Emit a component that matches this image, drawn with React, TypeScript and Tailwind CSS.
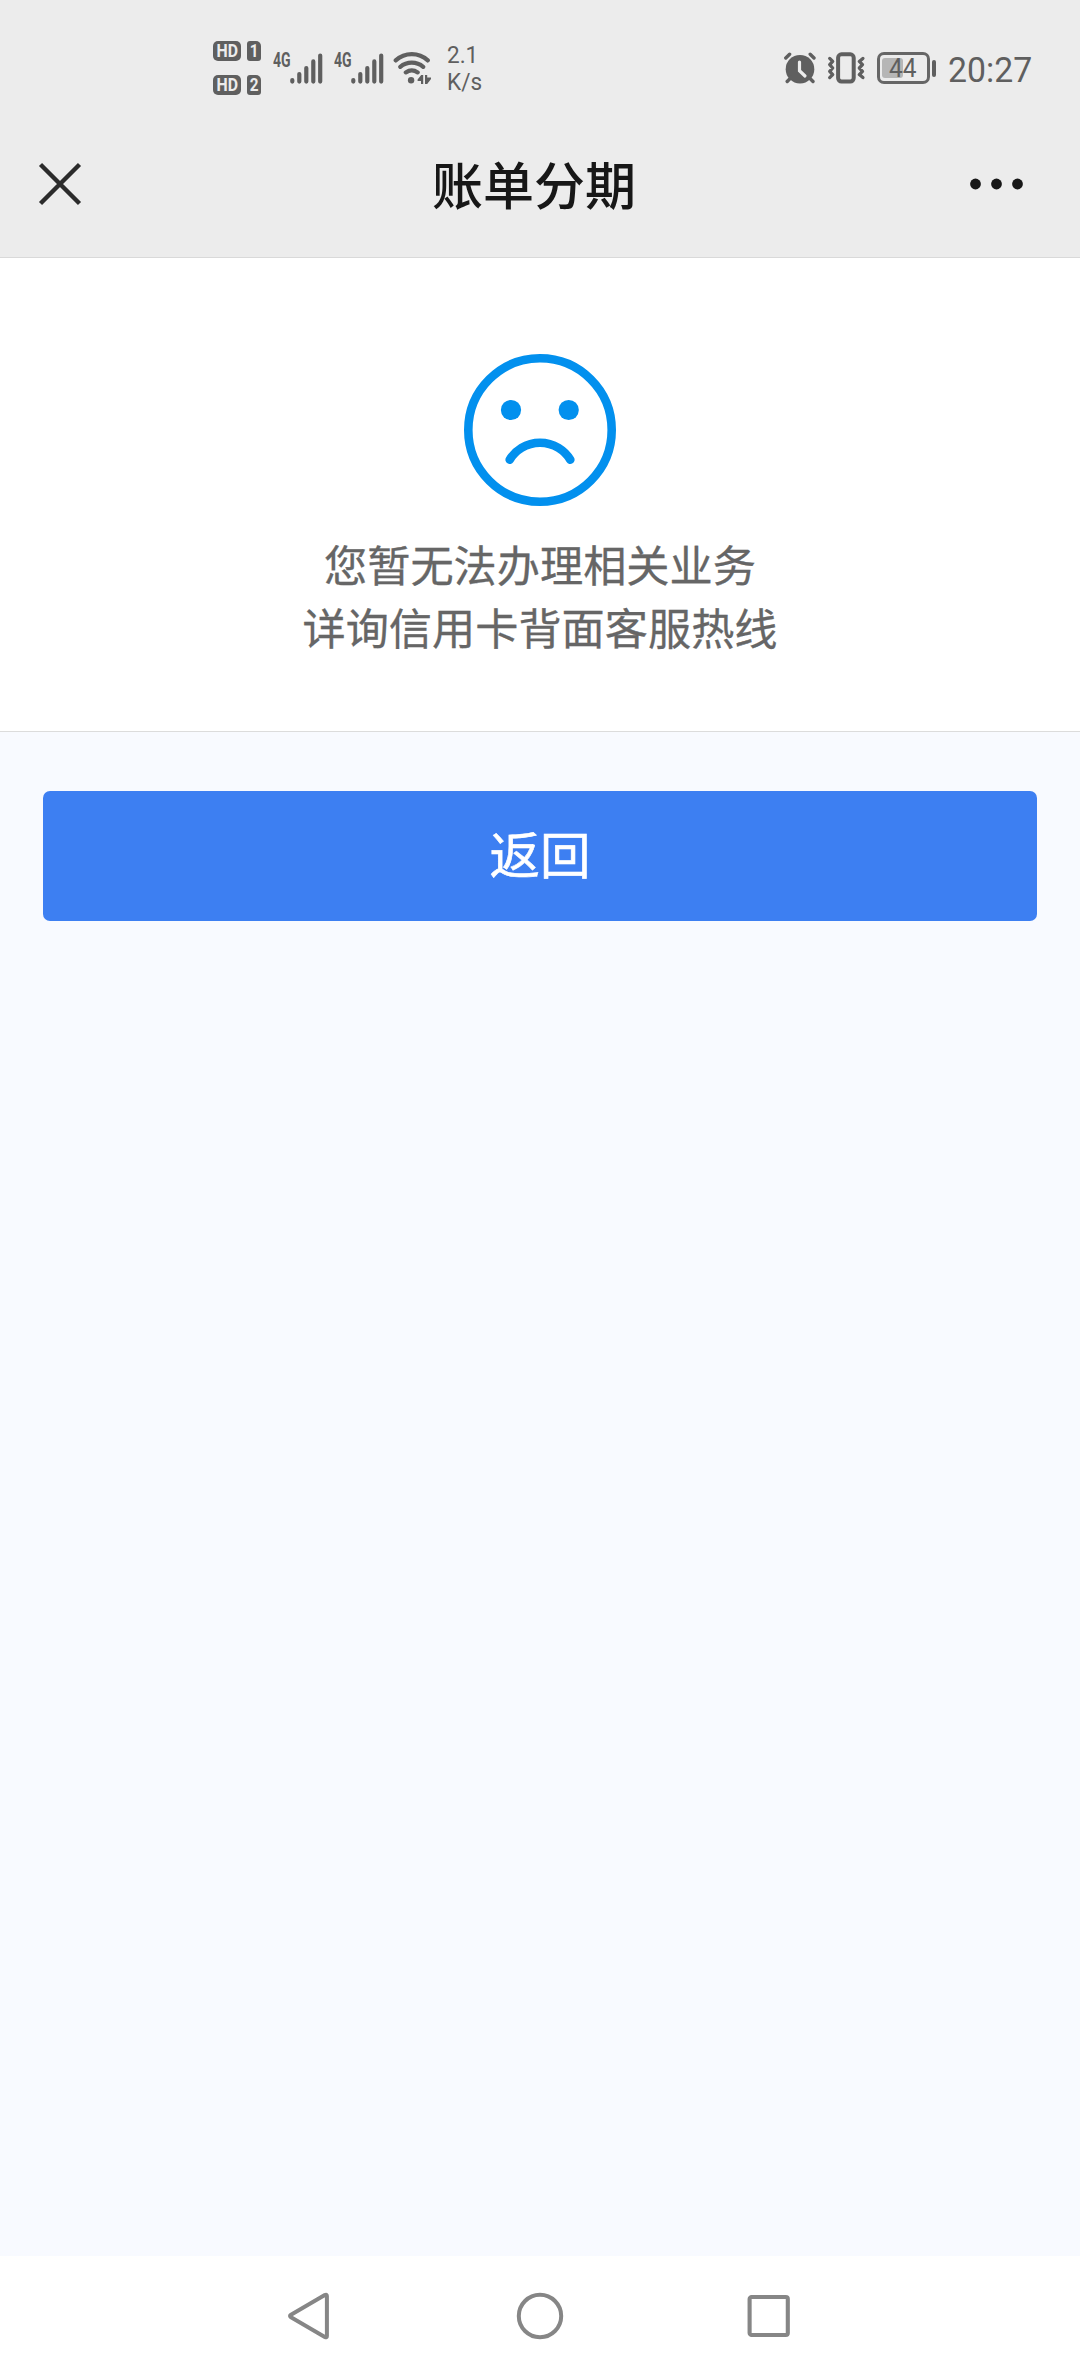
const cjk = "font-['Noto_Sans_CJK_SC',sans-serif]";

function NetworkBadge({ n }: { n: string }) {
  return (
    <div className="flex gap-[6px] font-['Roboto',sans-serif] text-[18px] font-bold leading-[20px] text-[#ececec]">
      <span className="flex h-[20px] w-[28px] items-center justify-center rounded-[5px] bg-[#5f5f5f]">
        <span className="scale-x-[0.88]">HD</span>
      </span>
      <span className="flex h-[20px] w-[14px] items-center justify-center rounded-[3px] rounded-tr-[5px] bg-[#5f5f5f]">
        <span className="scale-x-[0.85]">{n}</span>
      </span>
    </div>
  );
}

function Signal() {
  return (
    <div className="flex h-[31px] w-[50px] items-start">
      <span className="w-[17px] shrink-0 text-[19.5px] leading-[12px]">
        <span className="inline-block origin-left scale-x-[0.72] font-['Roboto',sans-serif] font-bold">4G</span>
      </span>
      <svg className="h-[31px] w-[33px] shrink-0" viewBox="0 0 33 31" fill="none" stroke="#5f5f5f" strokeWidth="4.2" strokeLinecap="round">
        <path d="M2.3 27v1.6M9.3 21v7.6M16.3 15v13.6M23.3 8.4v20.2M30.2 2.5v26.1" />
      </svg>
    </div>
  );
}

function StatusBar() {
  return (
    <div className="flex h-[111px] items-start pl-[213px] text-[#5f5f5f]">
      <div className="mt-[41px] flex w-[48px] flex-col gap-[14px]">
        <NetworkBadge n="1" />
        <NetworkBadge n="2" />
      </div>
      <div className="ml-[12px] mt-[53px] flex gap-[11px]">
        <Signal />
        <Signal />
      </div>
      <svg className="ml-[9px] mt-[52px] h-[32px] w-[39px]" viewBox="0 0 39 32" fill="none" stroke="#5f5f5f" strokeWidth="4.2" strokeLinecap="round">
        <path d="M2.7 8.4C12 .1 25.7.1 34.8 8.4M7.3 14.8c6.6-5.5 16.3-5.5 22.9 0M12.8 20.4c3.8-2.5 8.1-2.5 11.9 0" />
        <circle cx="18.1" cy="28.2" r="3.2" fill="#5f5f5f" stroke="none" />
        <path d="M30.2 22.9v9h-2.2v-2.8h-3.4v-1.6l3.6-4.6zM32 22.9v9h2.2l3.8-5v-1.5h-3.8v-2.5z" fill="#5f5f5f" stroke="none" />
      </svg>
      <div className="ml-[15px] mt-[42px] w-[40px] origin-left scale-x-[0.98] font-['Roboto',sans-serif] text-[23px] leading-[27px]">
        <div>2.1</div>
        <div>K/s</div>
      </div>
      <svg className="ml-[296px] mt-[52px] h-[32px] w-[35px]" viewBox="0 0 35 32" fill="none" stroke="#5f5f5f" strokeWidth="3.4" strokeLinecap="round">
        <circle cx="17" cy="17.2" r="14.3" fill="#5f5f5f" stroke="none" />
        <path d="M2.8 6 6.6 2.3M31 6l-3.8-3.7M4.2 29.5l4-4.2M30 29.5l-4.2-4.2" />
        <path d="M16.5 10v8.7l5.5 5.3" stroke="#ececec" strokeWidth="3.2" />
      </svg>
      <svg className="ml-[9px] mt-[52px] h-[32px] w-[39px]" viewBox="0 0 39 32" fill="none" stroke="#5f5f5f" strokeWidth="3.3" strokeLinecap="round" strokeLinejoin="round">
        <rect x="11.1" y="2.3" width="15.6" height="27.2" rx="3.4" strokeWidth="4" />
        <path d="m2.7 6.4 3 3-3 3.3 3 3.3-3 3.3 3 3.3-3 3M35.9 6.4l-3.6 3 3.2 3.3-3.2 3.3 3.2 3.3-3.2 3.3 3.6 3" />
      </svg>
      <div className="ml-[11px] mt-[52px] flex h-[32px] w-[60px] items-center">
        <div className="flex h-[32px] w-[53px] items-center rounded-[7px] border-[3.5px] border-[#666] pl-[2px]">
          <div className="h-[20px] w-[21px] shrink-0 rounded-[3px] bg-[#b6b6b6]" />
          <span className="ml-[-14px] origin-left scale-x-[0.94] font-['Roboto',sans-serif] text-[26px] leading-[26px]">44</span>
        </div>
        <div className="ml-[2px] h-[17px] w-[4px] rounded-full bg-[#5f5f5f]" />
      </div>
      <span className="ml-[11px] mt-[50px] origin-left scale-x-[0.965] whitespace-nowrap font-['Roboto',sans-serif] text-[35px] leading-[42px]">
        20:27
      </span>
    </div>
  );
}

export default function App() {
  return (
    <div className={`flex h-[2376px] w-[1080px] flex-col overflow-hidden bg-[#f8faff] ${cjk}`}>
      <header className="h-[258px] shrink-0 border-b border-[#d9d9d9] bg-[#ececec]">
        <StatusBar />
        <div className="flex h-[146px] items-center pl-[38px] pr-[56px]">
          <svg className="h-[44px] w-[44px]" viewBox="0 0 44 44" stroke="#2b2b2b" strokeWidth="4.4">
            <path d="m2.5 2.5 39 39M41.5 2.5l-39 39" />
          </svg>
          <h1 className="ml-[350px] pb-px text-[51px] font-medium leading-[73px] text-[#171717]">账单分期</h1>
          <svg className="ml-auto h-[12px] w-[54px]" viewBox="0 0 54 12" fill="#171717">
            <circle cx="5.5" cy="6" r="5.4" />
            <circle cx="26.5" cy="6" r="5.4" />
            <circle cx="47.5" cy="6" r="5.4" />
          </svg>
        </div>
      </header>
      <section className="flex h-[474px] shrink-0 flex-col items-center border-b border-[#dcdcdc] bg-white pt-[96px]">
        <svg className="h-[152px] w-[152px]" viewBox="0 0 152 152" fill="none" stroke="#0290ee" strokeWidth="8.6" strokeLinecap="round">
          <circle cx="76" cy="76" r="71.7" />
          <path d="M45.7 105.7a35.5 35.5 0 0 1 60.6 0" />
          <circle cx="47" cy="56" r="10.1" fill="#0290ee" stroke="none" />
          <circle cx="104.7" cy="56" r="10.1" fill="#0290ee" stroke="none" />
        </svg>
        <p className="mt-[26px] text-center text-[43.2px] leading-[63px] text-[#666] [-webkit-text-stroke:0.3px_#666]">
          您暂无法办理相关业务
          <br />
          详询信用卡背面客服热线
        </p>
      </section>
      <main className="flex-1 px-[43px] pt-[59px]">
        <button className="flex h-[130px] w-full items-center justify-center rounded-[7px] bg-[#3d7ff2] pb-[8px] text-[50.5px] leading-[74px] text-white [-webkit-text-stroke:0.6px_white]">
          返回
        </button>
      </main>
      <nav className="flex h-[120px] shrink-0 items-center bg-white pl-[286px]">
        <svg className="h-[50px] w-[46px]" viewBox="0 0 46 50" fill="none" stroke="#868686" strokeWidth="4" strokeLinejoin="round">
          <path d="M5 23.7 38.8 4q2.1-1 2.1 1v40q0 2-2.1 1L5 26.3q-2-1.3 0-2.6Z" />
        </svg>
        <svg className="ml-[183px] h-[50px] w-[50px]" viewBox="0 0 50 50" fill="none" stroke="#868686" strokeWidth="4">
          <circle cx="25" cy="25" r="21.2" />
        </svg>
        <svg className="ml-[179px] h-[50px] w-[50px]" viewBox="0 0 50 50" fill="none" stroke="#868686" strokeWidth="4.1">
          <rect x="5.6" y="6" width="38.2" height="38" rx="2" />
        </svg>
      </nav>
    </div>
  );
}
